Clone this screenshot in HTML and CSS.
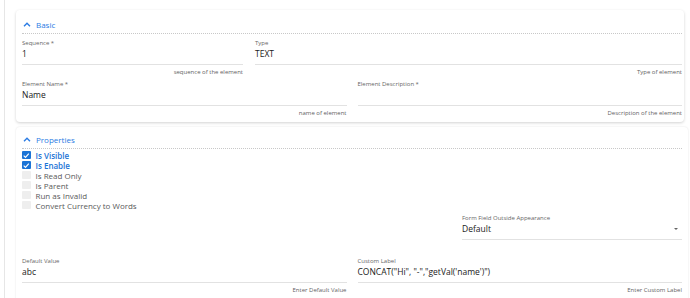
FILE: index.html
```html
<!DOCTYPE html>
<html lang="en">
<head>
  <meta charset="UTF-8" />
  <meta name="viewport" content="width=device-width, initial-scale=1.0" />
  <title>Element Properties</title>
  <link rel="stylesheet" href="styles.css">
</head>
<body>
  <div class="page">
    <div class="card basic">
      <div class="section-head">
        <svg class="chev" viewBox="0 0 8 5" width="8" height="5"><path d="M1 4.2 L4 1.2 L7 4.2" /></svg>
        <span>Basic</span>
      </div>
      <div class="row row-seq">
        <div class="field">
          <div class="label">Sequence *</div>
          <div class="value">1</div>
          <div class="hint">sequence of the element</div>
        </div>
        <div class="field">
          <div class="label">Type</div>
          <div class="value">TEXT</div>
          <div class="hint">Type of element</div>
        </div>
      </div>
      <div class="row row-half">
        <div class="field">
          <div class="label">Element Name *</div>
          <div class="value">Name</div>
          <div class="hint">name of element</div>
        </div>
        <div class="field">
          <div class="label">Element Description *</div>
          <div class="value"></div>
          <div class="hint">Description of the element</div>
        </div>
      </div>
    </div>

    <div class="card props">
      <div class="section-head">
        <svg class="chev" viewBox="0 0 8 5" width="8" height="5"><path d="M1 4.2 L4 1.2 L7 4.2" /></svg>
        <span>Properties</span>
      </div>
      <ul class="checks">
        <li class="on"><span class="box"><svg viewBox="0 0 10 10" width="9" height="9"><path d="M2 5.2 L4.1 7.2 L8 2.8" /></svg></span>Is Visible</li>
        <li class="on"><span class="box"><svg viewBox="0 0 10 10" width="9" height="9"><path d="M2 5.2 L4.1 7.2 L8 2.8" /></svg></span>Is Enable</li>
        <li><span class="box"></span>Is Read Only</li>
        <li><span class="box"></span>Is Parent</li>
        <li><span class="box"></span>Run as Invalid</li>
        <li><span class="box"></span>Convert Currency to Words</li>
      </ul>
      <div class="row row-select">
        <div class="field select">
          <div class="label">Form Field Outside Appearance</div>
          <div class="value">Default<span class="arrow"></span></div>
        </div>
      </div>
      <div class="row row-half">
        <div class="field">
          <div class="label">Default Value</div>
          <div class="value">abc</div>
          <div class="hint">Enter Default Value</div>
        </div>
        <div class="field">
          <div class="label">Custom Label</div>
          <div class="value">CONCAT("Hi", "-","getVal('name')")</div>
          <div class="hint">Enter Custom Label</div>
        </div>
      </div>
    </div>
  </div>
</body>
</html>
```

FILE: styles.css
```css
body {
  margin: 0;
  background: #fff;
  font-family: "Open Sans", Arial, sans-serif;
  color: #212121;
  overflow: hidden;
}
.page {
  margin-left: 4px;
  border-left: 1px solid #e6e6e6;
  padding: 10px 6px 0 11px;
  height: 298px;
  box-sizing: border-box;
  overflow: hidden;
}
.card {
  background: #fff;
  border-radius: 4px;
  box-shadow: 0 1px 3px rgba(0,0,0,0.18);
  padding: 8px 2px 5px 6px;
}
.props {
  margin-top: 5px;
  margin-right: -4px;
  padding: 6px 6px 20px 6px;
  border-radius: 4px 4px 0 0;
  box-shadow: 0 0 2px rgba(0,0,0,0.12);
}
.section-head {
  display: flex;
  align-items: center;
  gap: 5px;
  height: 12px;
  padding-left: 1px;
  padding-bottom: 3px;
  border-bottom: 1px dotted #c8c8c8;
  color: #2a7be4;
  font-size: 8px;
}
.chev path {
  fill: none;
  stroke: #2a7be4;
  stroke-width: 1.4;
}
.row {
  display: grid;
  margin-top: 5px;
}
.row + .row {
  margin-top: 4px;
}
.row-seq {
  grid-template-columns: 221px 1fr;
  column-gap: 12px;
}
.row-half {
  grid-template-columns: 1fr 1fr;
  column-gap: 11px;
}
.row-select {
  grid-template-columns: 1fr 220px;
  margin-top: 4px;
}
.row-select .select {
  grid-column: 2;
}
.props .row-select + .row {
  margin-top: 17px;
}
.label {
  font-size: 6px;
  line-height: 8px;
  color: #666;
}
.value {
  position: relative;
  height: 14px;
  line-height: 14px;
  padding-bottom: 3px;
  border-bottom: 1px solid #e2e2e2;
  font-size: 8.5px;
  color: #1a1a1a;
}
.hint {
  margin-top: 3px;
  font-size: 6px;
  line-height: 8px;
  text-align: right;
  color: #5f5f5f;
}
.arrow {
  position: absolute;
  right: 4px;
  top: 6px;
  border-left: 2.5px solid transparent;
  border-right: 2.5px solid transparent;
  border-top: 2.5px solid #666;
}
.checks {
  list-style: none;
  margin: 1px 0 0;
  padding: 0;
}
.checks li {
  display: flex;
  align-items: center;
  gap: 5px;
  height: 10px;
  font-size: 8px;
  color: #5a5a5a;
}
.checks li.on {
  color: #1c74d6;
  font-weight: 600;
}
.box {
  width: 8.5px;
  height: 8.5px;
  border-radius: 1px;
  background: #eeeeee;
  display: flex;
  align-items: center;
  justify-content: center;
}
.on .box {
  background: #1c74d6;
}
.box path {
  fill: none;
  stroke: #fff;
  stroke-width: 1.4;
}
```
